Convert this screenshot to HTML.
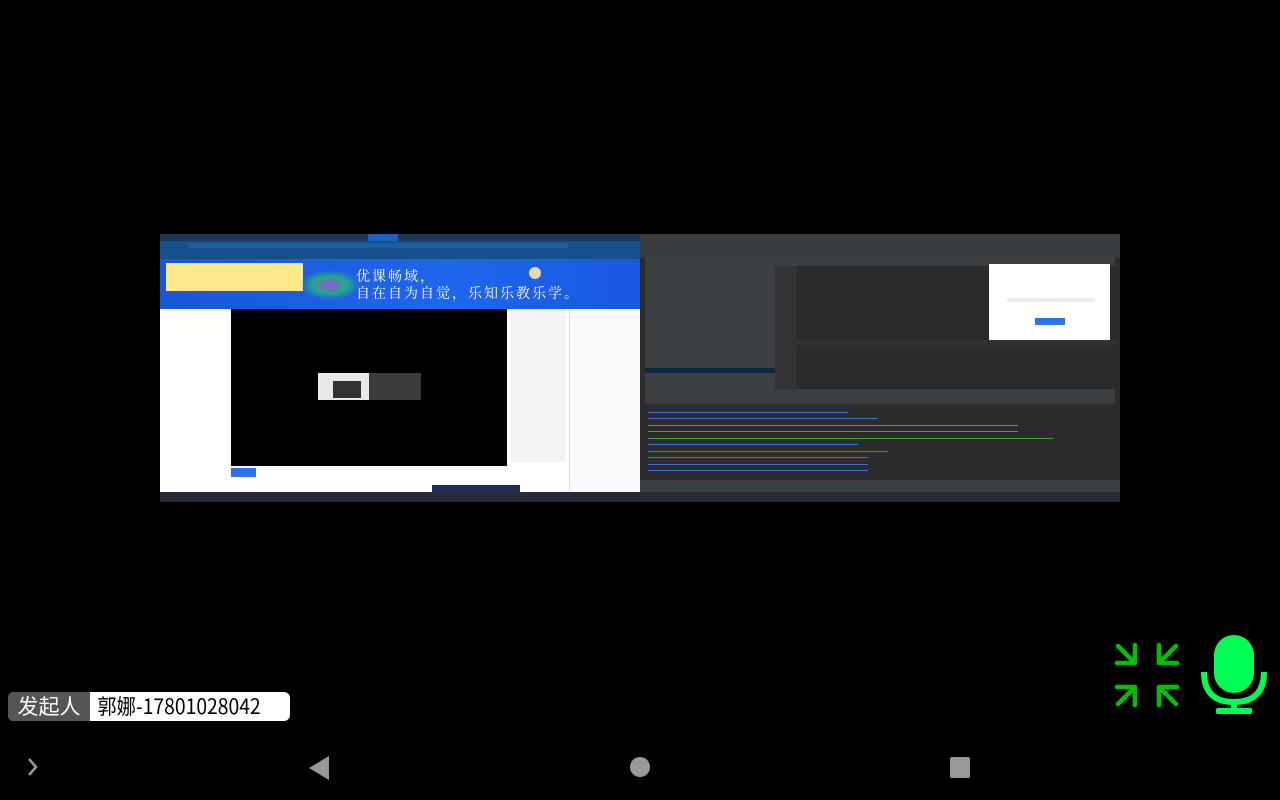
<!DOCTYPE html>
<html><head><meta charset="utf-8"><style>
body{margin:0;width:1280px;height:800px;background:#000;position:relative;overflow:hidden;font-family:"Liberation Sans","Noto Sans CJK SC",sans-serif}
.a{position:absolute}
.t{position:absolute;height:1px}
</style></head><body>
<!-- left share -->
<div class="a" style="left:160px;top:234px;width:480px;height:268px;background:#fff"></div>
<div class="a" style="left:160px;top:234px;width:480px;height:7px;background:#1d3557"></div>
<div class="a" style="left:368px;top:234px;width:30px;height:7px;background:#1565c0"></div>
<div class="a" style="left:160px;top:241px;width:480px;height:9px;background:#14508a"></div>
<div class="a" style="left:188px;top:243px;width:380px;height:5px;background:#1c5e9e"></div>
<div class="a" style="left:160px;top:250px;width:480px;height:9px;background:#154f8c"></div>
<div class="a" style="left:160px;top:259px;width:480px;height:50px;background:linear-gradient(90deg,#1a55d8,#1e66ee 60%,#1a58e0)"></div>
<div class="a" style="left:166px;top:263px;width:137px;height:28px;background:#fbe98a"></div>
<div class="a" style="left:300px;top:270px;width:60px;height:30px;background:radial-gradient(ellipse,#9c4de0,#22aa88 40%,transparent 70%)"></div>
<div class="a" style="left:356px;top:268px;color:#fff;font-size:14px;font-family:'Noto Serif CJK SC',serif;line-height:17px;letter-spacing:2px">优课畅域，<br>自在自为自觉，乐知乐教乐学。</div>
<div class="a" style="left:529px;top:267px;width:12px;height:12px;border-radius:50%;background:#e8d9a8"></div>
<div class="a" style="left:231px;top:309px;width:276px;height:157px;background:#000"></div>
<div class="a" style="left:318px;top:373px;width:51px;height:27px;background:#e8e8e8"></div>
<div class="a" style="left:333px;top:381px;width:28px;height:17px;background:#333"></div>
<div class="a" style="left:369px;top:373px;width:52px;height:27px;background:#3a3c3e"></div>
<div class="a" style="left:510px;top:309px;width:56px;height:153px;background:#f3f3f5"></div>
<div class="a" style="left:569px;top:309px;width:71px;height:183px;background:#fafafc;border-left:1px solid #ddd"></div>
<div class="a" style="left:231px;top:468px;width:25px;height:9px;background:#2f6fe8"></div>
<div class="a" style="left:432px;top:485px;width:88px;height:7px;background:#1f2e55"></div>
<div class="a" style="left:160px;top:492px;width:480px;height:10px;background:#262a33"></div>
<!-- right share IDE -->
<div class="a" style="left:640px;top:234px;width:480px;height:268px;background:#2b2b2b"></div>
<div class="a" style="left:640px;top:234px;width:480px;height:8px;background:#3c3f41"></div>
<div class="a" style="left:640px;top:242px;width:480px;height:16px;background:#3a3d3f"></div>
<div class="a" style="left:645px;top:258px;width:130px;height:131px;background:#3c3f41"></div>
<div class="a" style="left:645px;top:368px;width:130px;height:5px;background:#0d293e"></div>
<div class="a" style="left:775px;top:258px;width:340px;height:8px;background:#3c3f41"></div>
<div class="a" style="left:775px;top:266px;width:22px;height:123px;background:#313335"></div>
<div class="a" style="left:797px;top:340px;width:318px;height:5px;background:#323232"></div>
<div class="a" style="left:989px;top:264px;width:121px;height:76px;background:#fff"></div>
<div class="a" style="left:1007px;top:298px;width:88px;height:4px;background:#eee"></div>
<div class="a" style="left:1035px;top:318px;width:30px;height:7px;background:#2f74e6"></div>
<div class="a" style="left:645px;top:389px;width:470px;height:7px;background:#3c3f41"></div>
<div class="a" style="left:645px;top:396px;width:470px;height:8px;background:#3a3c3e"></div>
<div class="t" style="left:648px;top:412px;width:200px;background:#3d6fd0"></div>
<div class="t" style="left:648px;top:418px;width:230px;background:#3d6fd0"></div>
<div class="t" style="left:648px;top:425px;width:370px;background:#4aa040"></div>
<div class="t" style="left:648px;top:431px;width:370px;background:#4aa040"></div>
<div class="t" style="left:648px;top:438px;width:405px;background:#4aa040"></div>
<div class="t" style="left:648px;top:444px;width:210px;background:#3d6fd0"></div>
<div class="t" style="left:648px;top:451px;width:240px;background:#3d6fd0"></div>
<div class="t" style="left:648px;top:457px;width:220px;background:#3d6fd0"></div>
<div class="t" style="left:648px;top:464px;width:220px;background:#3d6fd0"></div>
<div class="t" style="left:648px;top:470px;width:220px;background:#3d6fd0"></div>
<div class="a" style="left:640px;top:480px;width:480px;height:12px;background:#3c3f41"></div>
<div class="a" style="left:640px;top:492px;width:480px;height:10px;background:#262a33"></div>
<!-- label -->
<div class="a" style="left:8px;top:692px;width:282px;height:29px;border-radius:6px;background:#fff;overflow:hidden;font-size:21px;line-height:29px;font-family:'Noto Sans CJK SC',sans-serif;white-space:nowrap">
<span style="display:inline-block;width:82px;background:#555;color:#fff;text-align:center;vertical-align:top">发起人</span><span style="display:inline-block;color:#000;padding-left:8px;transform:scaleX(0.92);transform-origin:left;vertical-align:top">郭娜-17801028042</span></div>
<!-- compress icon -->
<svg class="a" style="left:1114px;top:642px" width="66" height="66" viewBox="0 0 66 66" fill="none" stroke="#00c000" stroke-width="4.5" stroke-linecap="round" stroke-linejoin="round">
<path d="M4 4L21 21M21 3V21H3"/><path d="M62 4L45 21M45 3V21H63"/><path d="M4 62L21 45M21 63V45H3"/><path d="M62 62L45 45M45 63V45H63"/></svg>
<!-- mic -->
<svg class="a" style="left:1200px;top:634px" width="68" height="82" viewBox="0 0 68 82">
<rect x="14" y="1" width="40" height="58" rx="20" fill="#00ff55"/>
<path d="M4 38 Q4 68 34 68 Q64 68 64 38" fill="none" stroke="#00ff55" stroke-width="6"/>
<rect x="31" y="66" width="6" height="10" fill="#00ff55"/><rect x="16" y="74" width="36" height="6" rx="2" fill="#00ff55"/></svg>
<!-- nav -->
<svg class="a" style="left:25px;top:757px" width="16" height="20"><path d="M4 2L11 10L4 18" fill="none" stroke="#999" stroke-width="2.5"/></svg>
<svg class="a" style="left:309px;top:756px" width="20" height="24"><path d="M20 0V24L0 12Z" fill="#999"/></svg>
<div class="a" style="left:630px;top:757px;width:20px;height:20px;border-radius:50%;background:#999"></div>
<div class="a" style="left:950px;top:757px;width:20px;height:21px;border-radius:2px;background:#999"></div>
</body></html>
